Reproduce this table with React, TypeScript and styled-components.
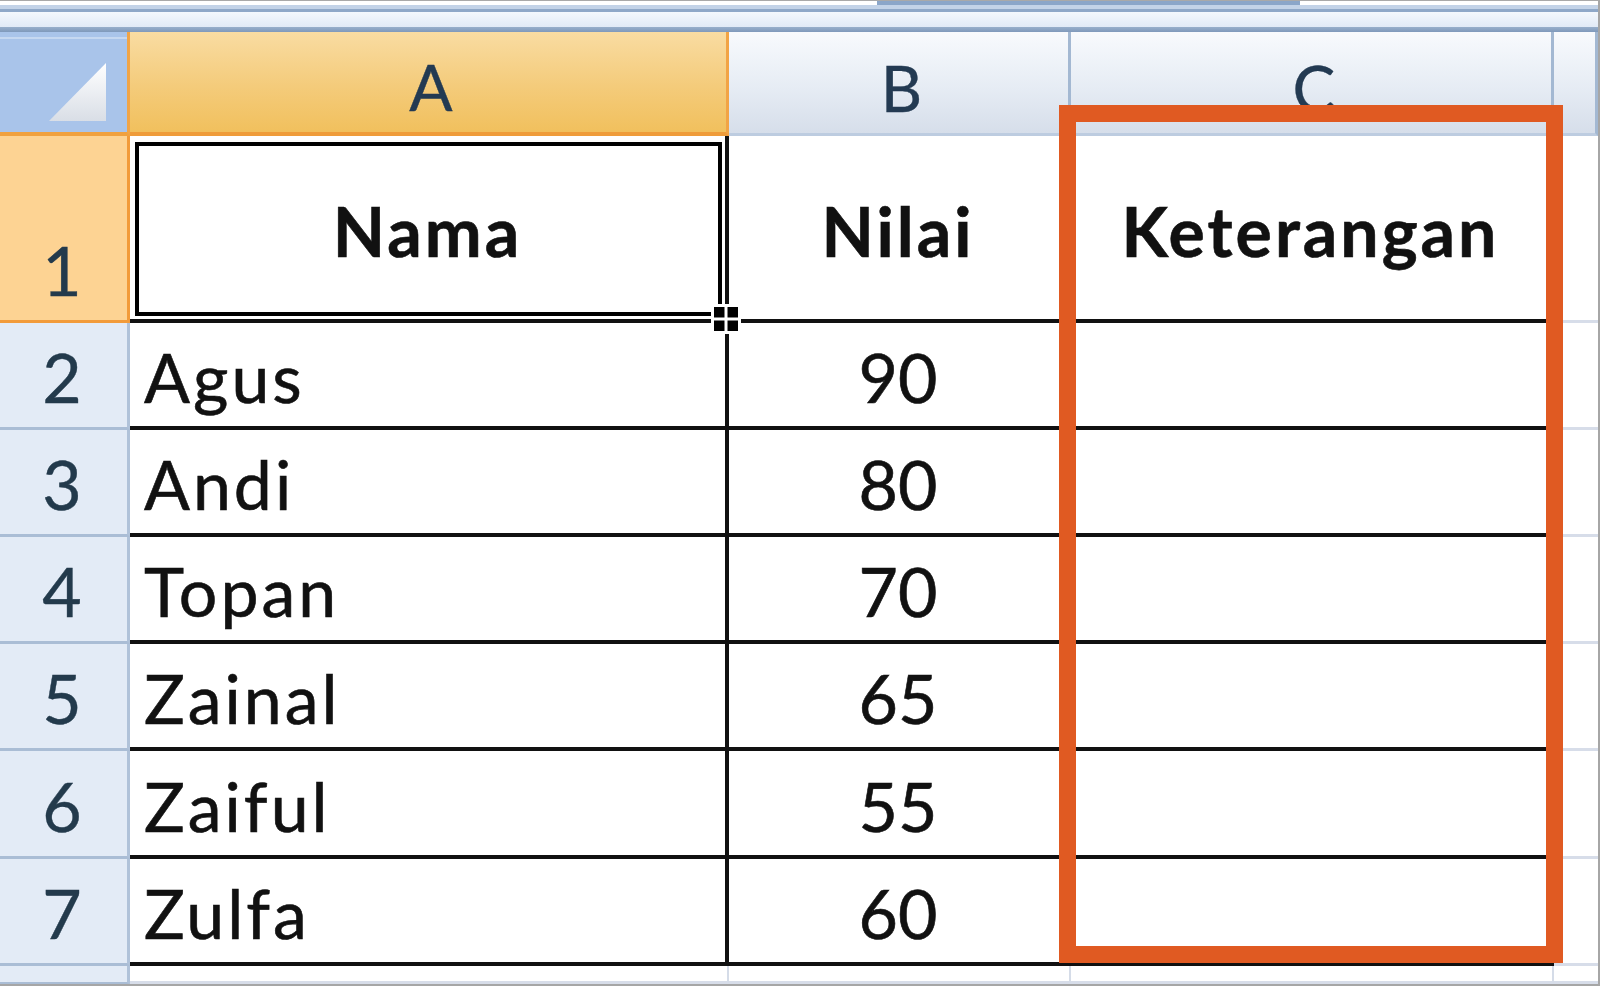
import { FC } from 'react';
import styled, { createGlobalStyle } from 'styled-components';

const GlobalStyle = createGlobalStyle`
  html, body {
    margin: 0;
    padding: 0;
    background: #ffffff;
    overflow: hidden;
  }
  * {
    box-sizing: border-box;
  }
`;

const Frame = styled.div`
  position: relative;
  width: 1600px;
  height: 986px;
  border-top: 1px solid #a9a9a9;
  border-right: 2px solid #a6a6a6;
  border-bottom: 2px solid #a6a6a6;
  background: #ffffff;
  font-family: Lato, 'Liberation Sans', sans-serif;
  overflow: hidden;
`;

const TopBar = styled.div`
  display: flex;
  flex-direction: column;
  height: 31px;
`;

const ThumbStrip = styled.div`
  height: 4px;
  background: linear-gradient(
    to right,
    #ffffff 0,
    #ffffff 877px,
    #8ba6c9 877px,
    #8ba6c9 1300px,
    #ffffff 1300px
  );
`;

const Strip = styled.div<{ $h: number; $bg: string }>`
  height: ${props => props.$h}px;
  background: ${props => props.$bg};
`;

const Sheet = styled.div`
  display: grid;
  grid-template-columns: 130px 599px 342px 483px 44px;
  grid-template-rows: 104px 187px 107px 107px 107px 107px 108px 107px 18px;
`;

const CornerCell = styled.div`
  background: #a9c4ea;
  border-right: 3px solid #f1a446;
  border-bottom: 4px solid #f0a13f;
  box-shadow: inset 0 8px 0 -3px #a9c4ea, inset 0 10px 0 -3px #c6d8f1;
  display: flex;
  align-items: flex-end;
  justify-content: flex-end;
  padding: 0 20px 11px 0;

  svg {
    display: block;
  }
`;

const ColHeader = styled.div<{ $selected?: boolean }>`
  display: flex;
  align-items: flex-end;
  justify-content: center;
  padding: 0 0 13px 6px;
  font-size: 64px;
  line-height: 1;
  color: #233a52;
  -webkit-text-stroke: 0.4px #233a52;
  background: ${props =>
    props.$selected
      ? 'linear-gradient(#f9dca2, #f4cb7a 55%, #f1c05d)'
      : 'linear-gradient(#f8fafd, #e6ecf4 55%, #d6deea)'};
  border-right: 3px solid ${props => (props.$selected ? '#f2a445' : '#a3b8d2')};
  border-bottom: ${props => (props.$selected ? '4px solid #ef9c3a' : '3px solid #bdcce0')};
`;

const RowHeader = styled.div<{ $selected?: boolean }>`
  display: flex;
  align-items: flex-end;
  justify-content: center;
  padding: 0 3px 16px 0;
  font-size: 68px;
  line-height: 1;
  color: #233a4c;
  -webkit-text-stroke: 0.4px #233a4c;
  background: ${props => (props.$selected ? '#fdd393' : '#e3ebf6')};
  border-right: 3px solid ${props => (props.$selected ? '#f29b3a' : '#b0c2d9')};
  border-bottom: 3px solid ${props => (props.$selected ? '#f29b3a' : '#aabdd5')};
`;

const Cell = styled.div<{
  $table?: boolean;
  $numeric?: boolean;
  $bold?: boolean;
  $title?: boolean;
  $open?: boolean;
}>`
  position: relative;
  display: flex;
  align-items: flex-end;
  justify-content: ${props => (props.$numeric || props.$title ? 'center' : 'flex-start')};
  padding: 0 0 ${props => (props.$title ? 54 : 15)}px
    ${props => (props.$numeric || props.$title ? 0 : 14)}px;
  font-size: 68px;
  font-weight: ${props => (props.$bold ? 700 : 400)};
  letter-spacing: ${props => (props.$numeric ? 0 : 3)}px;
  line-height: 1;
  color: #111111;
  -webkit-text-stroke: 0.6px #111111;
  background: #ffffff;
  white-space: nowrap;
  border-right: ${props =>
    props.$open ? 'none' : props.$table ? '4px solid #111111' : '2px solid #d5dce8'};
  border-bottom: ${props => (props.$table ? '4px solid #111111' : '3px solid #d7dde9')};
`;

const Selection = styled.div`
  position: absolute;
  left: 5px;
  top: 6px;
  width: 587px;
  height: 174px;
  border: 4px solid #000000;
  pointer-events: none;
`;

const FillHandle = styled.svg`
  position: absolute;
  left: 581px;
  top: 168px;
  z-index: 2;
`;

const Highlight = styled.div`
  position: absolute;
  left: 1059px;
  top: 104px;
  width: 504px;
  height: 858px;
  border: 17px solid #e05a22;
  z-index: 5;
  pointer-events: none;
`;

interface Column {
  key: string;
  label: string;
  selected?: boolean;
}

const columns: Column[] = [
  { key: 'A', label: 'A', selected: true },
  { key: 'B', label: 'B' },
  { key: 'C', label: 'C' },
  { key: 'D', label: '' },
];

interface Row {
  n: number;
  name: string;
  value: string;
  note: string;
}

const rows: Row[] = [
  { n: 2, name: 'Agus', value: '90', note: '' },
  { n: 3, name: 'Andi', value: '80', note: '' },
  { n: 4, name: 'Topan', value: '70', note: '' },
  { n: 5, name: 'Zainal', value: '65', note: '' },
  { n: 6, name: 'Zaiful', value: '55', note: '' },
  { n: 7, name: 'Zulfa', value: '60', note: '' },
];

const CornerTriangle: FC = () => (
  <svg width="58" height="58" viewBox="0 0 58 58">
    <defs>
      <linearGradient id="tri" x1="0" y1="0" x2="0" y2="1">
        <stop offset="0" stopColor="#ffffff" />
        <stop offset="1" stopColor="#d9dee6" />
      </linearGradient>
    </defs>
    <polygon points="57,0 57,58 0,58" fill="url(#tri)" />
  </svg>
);

const RowContent: FC<{ row: Row }> = ({ row }) => (
  <>
    <RowHeader>{row.n}</RowHeader>
    <Cell $table>{row.name}</Cell>
    <Cell $table $numeric>
      {row.value}
    </Cell>
    <Cell $table>{row.note}</Cell>
    <Cell $open />
  </>
);

const App: FC = () => {
  return (
    <>
      <GlobalStyle />
      <Frame>
        <TopBar>
          <ThumbStrip />
          <Strip $h={4} $bg="#c3d3e8" />
          <Strip $h={3} $bg="#8fa8c8" />
          <Strip $h={15} $bg="linear-gradient(#f4f8fd, #e1eaf6)" />
          <Strip $h={5} $bg="linear-gradient(#98afcb, #7f99bb)" />
        </TopBar>

        <Sheet>
          <CornerCell>
            <CornerTriangle />
          </CornerCell>
          {columns.map(col => (
            <ColHeader key={col.key} $selected={col.selected}>
              {col.label}
            </ColHeader>
          ))}

          <RowHeader $selected>1</RowHeader>
          <Cell $table $bold $title>
            Nama
            <Selection />
            <FillHandle width="30" height="30" viewBox="0 0 30 30">
              <rect x="0" y="0" width="30" height="30" fill="#ffffff" />
              <rect x="3" y="3" width="24" height="24" fill="#000000" />
              <rect x="13.5" y="3" width="3" height="24" fill="#ffffff" />
              <rect x="3" y="13.5" width="24" height="3" fill="#ffffff" />
            </FillHandle>
          </Cell>
          <Cell $table $bold $title>
            Nilai
          </Cell>
          <Cell $table $bold $title>
            Keterangan
          </Cell>
          <Cell $open />

          {rows.map(row => (
            <RowContent key={row.n} row={row} />
          ))}

          <RowHeader />
          <Cell />
          <Cell />
          <Cell />
          <Cell $open />
        </Sheet>

        <Highlight />
      </Frame>
    </>
  );
};

export default App;
